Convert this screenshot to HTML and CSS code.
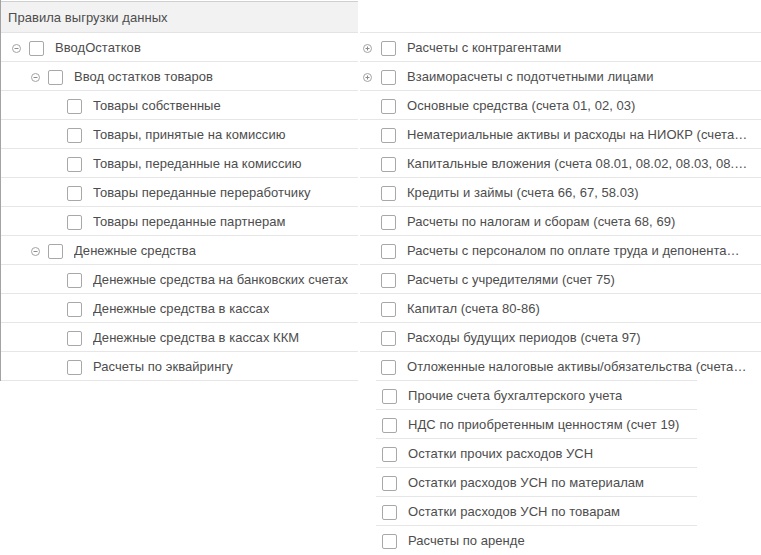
FILE: index.html
```html
<!DOCTYPE html>
<html lang="ru">
<head>
<meta charset="utf-8">
<title>Правила выгрузки данных</title>
<link rel="stylesheet" href="styles.css">
</head>
<body>
<div class="page">
  <div class="left">
    <div class="header">Правила выгрузки данных</div>
    <div class="row l0"><span class="exp"><svg width="9" height="9" viewBox="0 0 9 9"><circle cx="4.5" cy="4.5" r="4" fill="none" stroke="#a3a3a3"/><path d="M2.5 4.5h4" stroke="#8c8c8c"/></svg></span><span class="cb"></span><span class="txt">ВводОстатков</span></div>
    <div class="row l1"><span class="exp"><svg width="9" height="9" viewBox="0 0 9 9"><circle cx="4.5" cy="4.5" r="4" fill="none" stroke="#a3a3a3"/><path d="M2.5 4.5h4" stroke="#8c8c8c"/></svg></span><span class="cb"></span><span class="txt">Ввод остатков товаров</span></div>
    <div class="row l2"><span class="exp"></span><span class="cb"></span><span class="txt">Товары собственные</span></div>
    <div class="row l2"><span class="exp"></span><span class="cb"></span><span class="txt">Товары, принятые на комиссию</span></div>
    <div class="row l2"><span class="exp"></span><span class="cb"></span><span class="txt">Товары, переданные на комиссию</span></div>
    <div class="row l2"><span class="exp"></span><span class="cb"></span><span class="txt">Товары переданные переработчику</span></div>
    <div class="row l2"><span class="exp"></span><span class="cb"></span><span class="txt">Товары переданные партнерам</span></div>
    <div class="row l1"><span class="exp"><svg width="9" height="9" viewBox="0 0 9 9"><circle cx="4.5" cy="4.5" r="4" fill="none" stroke="#a3a3a3"/><path d="M2.5 4.5h4" stroke="#8c8c8c"/></svg></span><span class="cb"></span><span class="txt">Денежные средства</span></div>
    <div class="row l2"><span class="exp"></span><span class="cb"></span><span class="txt">Денежные средства на банковских счетах</span></div>
    <div class="row l2"><span class="exp"></span><span class="cb"></span><span class="txt">Денежные средства в кассах</span></div>
    <div class="row l2"><span class="exp"></span><span class="cb"></span><span class="txt">Денежные средства в кассах ККМ</span></div>
    <div class="row l2"><span class="exp"></span><span class="cb"></span><span class="txt">Расчеты по эквайрингу</span></div>
  </div>
  <div class="right">
    <div class="spacer"></div>
    <div class="rrow"><span class="exp"><svg width="9" height="9" viewBox="0 0 9 9"><circle cx="4.5" cy="4.5" r="4" fill="none" stroke="#a3a3a3"/><path d="M2.5 4.5h4M4.5 2.5v4" stroke="#8c8c8c"/></svg></span><span class="cb"></span><span class="txt">Расчеты с контрагентами</span></div>
    <div class="rrow"><span class="exp"><svg width="9" height="9" viewBox="0 0 9 9"><circle cx="4.5" cy="4.5" r="4" fill="none" stroke="#a3a3a3"/><path d="M2.5 4.5h4M4.5 2.5v4" stroke="#8c8c8c"/></svg></span><span class="cb"></span><span class="txt">Взаиморасчеты с подотчетными лицами</span></div>
    <div class="rrow"><span class="exp"></span><span class="cb"></span><span class="txt">Основные средства (счета 01, 02, 03)</span></div>
    <div class="rrow"><span class="exp"></span><span class="cb"></span><span class="txt">Нематериальные активы и расходы на НИОКР (счета 04, 05, 08.05, 08.08)</span></div>
    <div class="rrow"><span class="exp"></span><span class="cb"></span><span class="txt">Капитальные вложения (счета 08.01, 08.02, 08.03, 08.04, 08.06, 08.07)</span></div>
    <div class="rrow"><span class="exp"></span><span class="cb"></span><span class="txt">Кредиты и займы (счета 66, 67, 58.03)</span></div>
    <div class="rrow"><span class="exp"></span><span class="cb"></span><span class="txt">Расчеты по налогам и сборам (счета 68, 69)</span></div>
    <div class="rrow"><span class="exp"></span><span class="cb"></span><span class="txt">Расчеты с персоналом по оплате труда и депонентами (счета 70, 76.04)</span></div>
    <div class="rrow"><span class="exp"></span><span class="cb"></span><span class="txt">Расчеты с учредителями (счет 75)</span></div>
    <div class="rrow"><span class="exp"></span><span class="cb"></span><span class="txt">Капитал (счета 80-86)</span></div>
    <div class="rrow"><span class="exp"></span><span class="cb"></span><span class="txt">Расходы будущих периодов (счета 97)</span></div>
    <div class="rrow"><span class="exp"></span><span class="cb"></span><span class="txt">Отложенные налоговые активы/обязательства (счета 09, 77)</span></div>
    <div class="lower">
      <div class="brow"><span class="cb"></span><span class="txt">Прочие счета бухгалтерского учета</span></div>
      <div class="brow"><span class="cb"></span><span class="txt">НДС по приобретенным ценностям (счет 19)</span></div>
      <div class="brow"><span class="cb"></span><span class="txt">Остатки прочих расходов УСН</span></div>
      <div class="brow"><span class="cb"></span><span class="txt">Остатки расходов УСН по материалам</span></div>
      <div class="brow"><span class="cb"></span><span class="txt">Остатки расходов УСН по товарам</span></div>
      <div class="brow"><span class="cb"></span><span class="txt">Расчеты по аренде</span></div>
    </div>
  </div>
</div>
</body>
</html>
```

FILE: styles.css
```css
html, body {
  margin: 0;
  padding: 0;
  background: #ffffff;
  overflow: hidden;
}
body {
  font-family: "Liberation Sans", Arial, sans-serif;
  font-size: 13px;
  letter-spacing: 0.05px;
  color: #4d4d4d;
}
.page {
  display: flex;
  align-items: flex-start;
  width: 761px;
  height: 555px;
}
.left {
  width: 358px;
  flex: none;
  border-left: 1px solid #a3a3a3;
  box-sizing: border-box;
}
.header {
  margin-top: 1px;
  height: 30px;
  border-top: 1px solid #cfcfcf;
  border-bottom: 1px solid #e3e3e3;
  background: #f2f2f2;
  display: flex;
  align-items: center;
  padding-left: 7px;
}
.row {
  height: 28px;
  border-bottom: 1px solid #e6e6e6;
  display: flex;
  align-items: center;
  white-space: nowrap;
}
.l0 { padding-left: 9px; }
.l1 { padding-left: 28px; }
.l2 { padding-left: 47px; }
.exp {
  width: 19px;
  flex: none;
  display: flex;
  align-items: center;
  padding-left: 2px;
  box-sizing: border-box;
  margin-top: 2px;
}
.exp svg { display: block; }
.cb {
  width: 15px;
  height: 15px;
  flex: none;
  box-sizing: border-box;
  border: 1px solid #a8a8a8;
  border-radius: 2px;
  background: #fff;
  margin-top: 2px;
}
.txt {
  margin-left: 11px;
  overflow: hidden;
  text-overflow: ellipsis;
  white-space: nowrap;
  min-width: 0;
}
.right {
  margin-left: 2px;
  width: 401px;
  flex: none;
}
.spacer {
  height: 32px;
}
.rrow {
  height: 28px;
  border-top: 1px solid #e6e6e6;
  display: flex;
  align-items: center;
  padding-left: 2px;
  padding-right: 13px;
}
.rrow .exp { padding-left: 1px; }
.lower {
  margin-left: 16px;
  width: 321px;
}
.brow {
  height: 28px;
  border-top: 1px solid #e6e6e6;
  display: flex;
  align-items: center;
  padding-left: 6px;
  white-space: nowrap;
}
```
